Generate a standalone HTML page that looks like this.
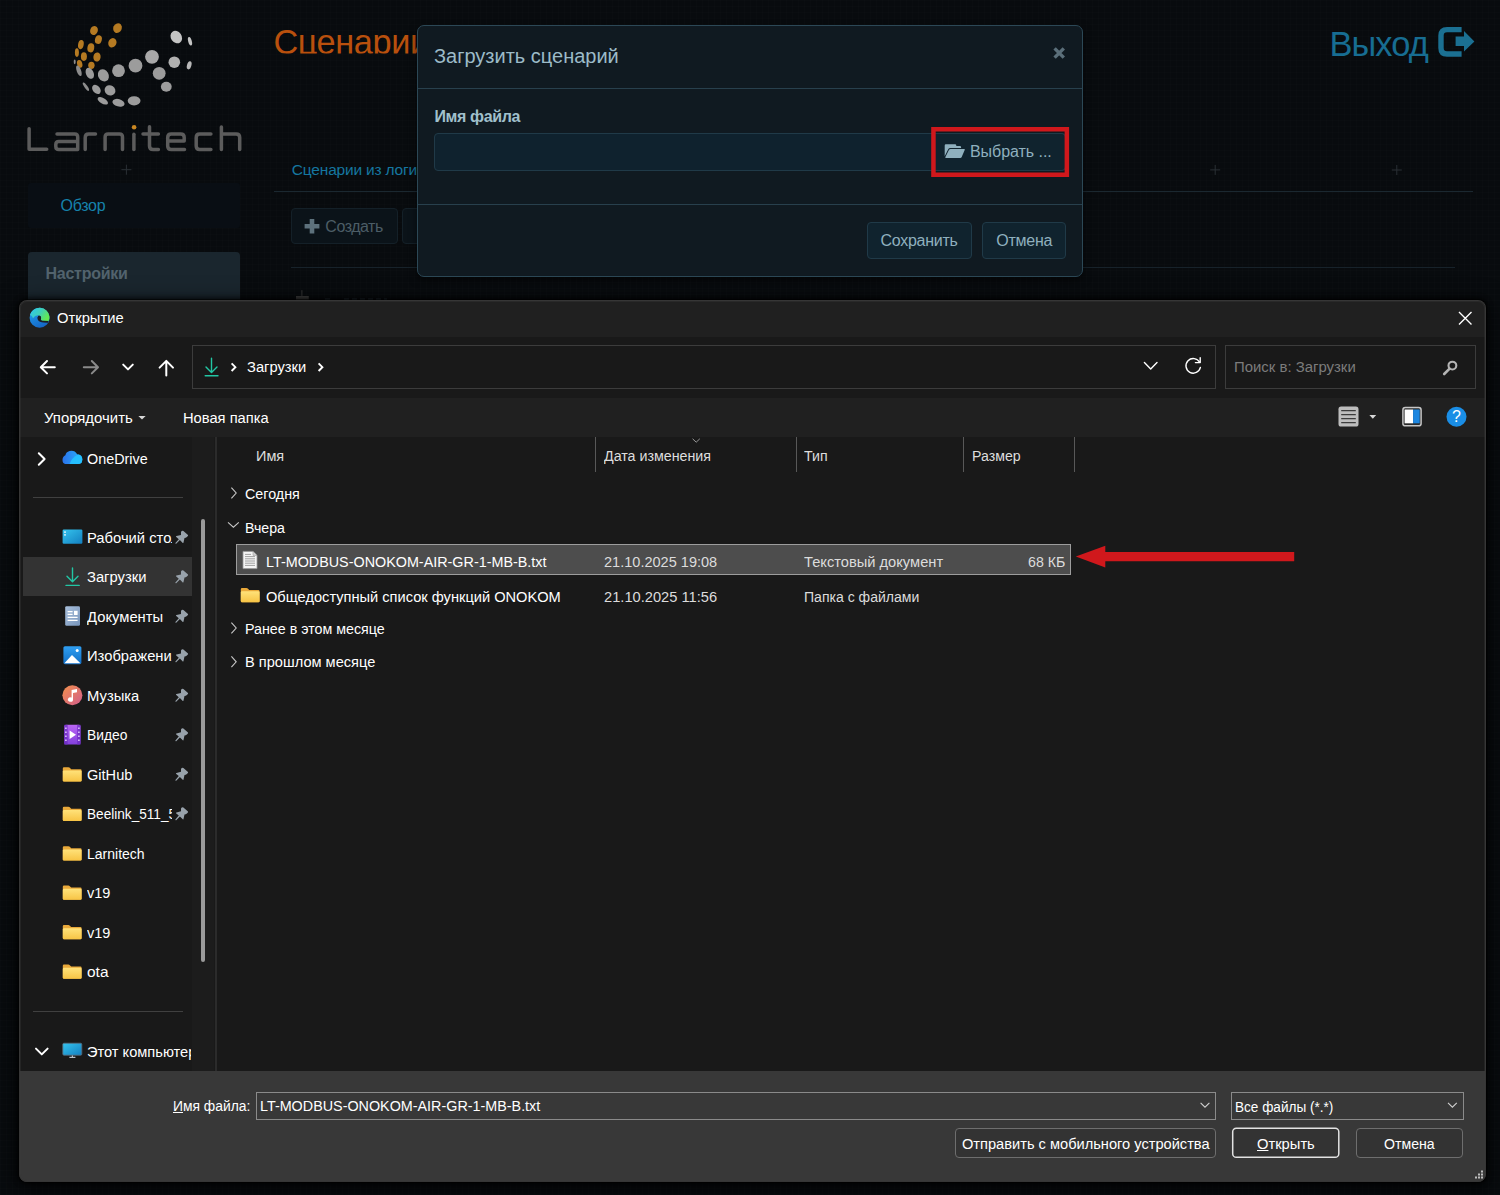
<!DOCTYPE html>
<html lang="ru"><head><meta charset="utf-8"><title>Открытие</title>
<style>
html,body{margin:0;padding:0;}
body{width:1500px;height:1195px;overflow:hidden;position:relative;background:#080b0e;font-family:"Liberation Sans",sans-serif;}
.a{position:absolute;box-sizing:border-box;}
.t{position:absolute;white-space:nowrap;line-height:24px;height:24px;font-family:"Liberation Sans",sans-serif;}
.i{display:inline-block;transform-origin:0 50%;white-space:nowrap;}
svg{position:absolute;overflow:visible;}
</style></head><body>
<!-- ===== background web page (dimmed) ===== -->
<div class="a" id="grid" style="left:0;top:0;width:1500px;height:1195px;background-image:linear-gradient(rgba(255,255,255,.008) 1px,transparent 1px),linear-gradient(90deg,rgba(255,255,255,.008) 1px,transparent 1px);background-size:6px 6px;"></div>
<div class="a" style="left:28px;top:183px;width:212px;height:45px;background:#090e14;border-radius:3px;"></div>
<div class="a" style="left:28px;top:252px;width:212px;height:50px;background:#1a262e;border-radius:4px 4px 0 0;"></div>
<div class="a" style="left:274px;top:191px;width:1199px;height:1px;background:#1b2830;"></div>
<div class="a" style="left:291px;top:267px;width:1164px;height:1px;background:#17222a;"></div>
<div class="a" style="left:291px;top:208px;width:107px;height:36px;background:#0b1319;border:1px solid #142028;border-radius:4px;"></div>
<div class="a" style="left:402px;top:208px;width:60px;height:36px;background:#0b1319;border:1px solid #142028;border-radius:4px;"></div>
<!--LOGO-->
<svg id="bgicons" width="1500" height="310" viewBox="0 0 1500 310" style="left:0;top:0;">
<!-- logo dots -->
<g fill="#b57a22">
<ellipse cx="117.5" cy="28.1" rx="4.2" ry="5" transform="rotate(25 117.5 28.1)"/>
<ellipse cx="94" cy="30.5" rx="3.8" ry="4.6" transform="rotate(20 94 30.5)"/>
<ellipse cx="98.4" cy="39.6" rx="3.4" ry="4.4" transform="rotate(15 98.4 39.6)"/>
<ellipse cx="112.4" cy="42.8" rx="4" ry="4.8" transform="rotate(25 112.4 42.8)"/>
<ellipse cx="80.9" cy="44.6" rx="2.8" ry="4.6" transform="rotate(10 80.9 44.6)"/>
<ellipse cx="90.8" cy="47.8" rx="3.4" ry="4.6" transform="rotate(10 90.8 47.8)"/>
<ellipse cx="76.9" cy="52.6" rx="2" ry="4.4"/>
<ellipse cx="83.9" cy="56.6" rx="3" ry="4.4"/>
<ellipse cx="97" cy="57" rx="3.6" ry="4.6" transform="rotate(10 97 57)"/>
<ellipse cx="79.7" cy="63.9" rx="2.6" ry="4" transform="rotate(-15 79.7 63.9)"/>
<ellipse cx="91.4" cy="65.3" rx="3.2" ry="3.6"/>
</g>
<g fill="#9c9c9c">
<ellipse cx="176.3" cy="37.1" rx="5.4" ry="6.6" transform="rotate(-35 176.3 37.1)" fill="#c4c4c4"/>
<ellipse cx="190" cy="41.2" rx="1.8" ry="4.4" transform="rotate(-15 190 41.2)" fill="#c4c4c4"/>
<circle cx="152" cy="56.8" r="6.9" fill="#a8a8a8"/>
<circle cx="174.3" cy="62.2" r="5.8" fill="#b0b0b0"/>
<ellipse cx="189.2" cy="65.3" rx="2.2" ry="4.2" transform="rotate(15 189.2 65.3)" fill="#b8b8b8"/>
<circle cx="135.5" cy="65.7" r="6.9"/>
<circle cx="159.2" cy="73.3" r="6.4"/>
<circle cx="118.5" cy="70.7" r="6.4"/>
<ellipse cx="103.4" cy="75.3" rx="5.2" ry="6.4" transform="rotate(-30 103.4 75.3)"/>
<ellipse cx="89.8" cy="73.3" rx="3.8" ry="5.8" transform="rotate(-25 89.8 73.3)"/>
<ellipse cx="78.9" cy="70.7" rx="2.2" ry="5.6" transform="rotate(-20 78.9 70.7)" fill="#8c8c8c"/>
<ellipse cx="74.7" cy="61.8" rx="1" ry="2.4" fill="#8c8c8c"/>
<ellipse cx="166.3" cy="86.7" rx="5.4" ry="5"/>
<ellipse cx="110" cy="90.4" rx="5.6" ry="5" transform="rotate(35 110 90.4)"/>
<ellipse cx="96.4" cy="89.4" rx="3.6" ry="5.2" transform="rotate(-40 96.4 89.4)"/>
<ellipse cx="85.9" cy="86.7" rx="1.5" ry="5" transform="rotate(-35 85.9 86.7)" fill="#8c8c8c"/>
<ellipse cx="134.1" cy="100.8" rx="6.4" ry="4.6"/>
<ellipse cx="118.5" cy="102.8" rx="6.2" ry="3.7" transform="rotate(15 118.5 102.8)"/>
<ellipse cx="102.8" cy="100.8" rx="5.8" ry="2.8" transform="rotate(30 102.8 100.8)"/>
</g>
<!-- wordmark -->
<g fill="none" stroke="#5c5c5c" stroke-width="3.5" stroke-linecap="round" stroke-linejoin="round">
<path d="M29.1 128.8 V149.3 H46.7"/>
<path d="M57 134.1 H74.7 Q77.7 134.1 77.7 137.1 V149.4 H58.8 Q55.8 149.4 55.8 146.4 V144.5 Q55.8 141.5 58.8 141.5 H77.7"/>
<path d="M85.2 149.6 V137.6 Q85.2 134.1 88.7 134.1 H95.5"/>
<path d="M105.1 149.6 V137.1 Q105.1 134.1 108.1 134.1 H119.5 Q122.5 134.1 122.5 137.1 V149.6"/>
<path d="M133.9 134.2 V149.6"/>
<path d="M149.5 126.7 V145.9 Q149.5 149.4 153 149.4 H158.4 M143 134.1 H158.4"/>
<path d="M184.5 149.4 H171.2 Q167.7 149.4 167.7 145.9 V137.6 Q167.7 134.1 171.2 134.1 H180.7 Q184.2 134.1 184.2 137.6 V140.9 H167.7"/>
<path d="M210.9 134.1 H199.7 Q196.2 134.1 196.2 137.6 V145.9 Q196.2 149.4 199.7 149.4 H210.9"/>
<path d="M221.4 126.9 V149.6 M221.4 134.1 H236.2 Q239.7 134.1 239.7 137.6 V149.6"/>
</g>
<circle cx="134.1" cy="127.2" r="2.3" fill="#c98722"/>
<!-- crosses -->
<path d="M121.4 169.7 H131.4 M126.4 164.7 V174.7 M1210.2 169.9 H1220.2 M1215.2 164.9 V174.9 M1391.8 170 H1401.8 M1396.8 165 V175" stroke="#2a3035" stroke-width="1"/>
<!-- plus icon -->
<path d="M312 219 V233.4 M304.6 226.2 H319.4" stroke="#5d717c" stroke-width="4.6" fill="none"/>
<!-- exit icon -->
<path d="M1461.6 29.6 H1447 Q1441 29.6 1441 35.6 V48 Q1441 54 1447 54 H1461.6" stroke="#1b7092" stroke-width="5.4" fill="none" stroke-linejoin="round"/>
<path d="M1455.6 36.6 H1464 V31 L1474.4 41.4 L1464 51.6 V46 H1455.6 Z" fill="#1b7092"/>
<!-- small hidden icons near dialog top -->
<path d="M301.9 290.2 V296.2" stroke="#363636" stroke-width="1"/>
<rect x="296" y="296" width="12.8" height="5" fill="#3e3e3e"/>
<path d="M325 299.3 H332 M344 299.3 H387" stroke="#24323a" stroke-width="1.4" stroke-dasharray="5 3"/>
</svg>

<span id="h1" class="t" style="left:273.40px;top:29.60px;font-size:34.3px;color:#b9500d;font-weight:400;clip-path:inset(0 10px 0 0);"><span class="i" style="letter-spacing:-0.400px;">Сценарии</span></span>
<span id="exit" class="t" style="left:1329.40px;top:32.20px;font-size:34.4px;color:#176d92;font-weight:400;"><span class="i" style="letter-spacing:-0.850px;">Выход</span></span>
<span id="m_obzor" class="t" style="left:60.50px;top:194.00px;font-size:16px;color:#1682ab;font-weight:400;"><span class="i" style="letter-spacing:-0.275px;">Обзор</span></span>
<span id="m_nastr" class="t" style="left:45.50px;top:262.00px;font-size:16px;color:#52636d;font-weight:700;"><span class="i" style="letter-spacing:-0.262px;">Настройки</span></span>
<span id="scen_logi" class="t" style="left:291.80px;top:157.80px;font-size:15.5px;color:#1577a0;font-weight:400;"><span class="i" style="letter-spacing:-0.187px;">Сценарии из логи</span></span>
<span id="btn_create" class="t" style="left:325.30px;top:215.00px;font-size:16px;color:#4c5d66;font-weight:400;"><span class="i" style="letter-spacing:-0.467px;">Создать</span></span>
<!-- ===== web modal ===== -->
<div class="a" id="modal" style="left:417px;top:25px;width:666px;height:252px;background:#101a21;border:1px solid #2c4856;border-radius:7px;box-shadow:0 3px 9px rgba(0,0,0,.5);"></div>
<div class="a" style="left:418px;top:88px;width:664px;height:1px;background:#28404d;"></div>
<div class="a" style="left:418px;top:204px;width:664px;height:1px;background:#28404d;"></div>
<div class="a" style="left:434px;top:133px;width:632px;height:38px;background:#0f222e;border:1px solid #203a48;border-radius:4px;"></div>
<div class="a" style="left:935px;top:133px;width:131px;height:38px;background:#10232e;border:1px solid #203a48;border-left:none;border-radius:0 5px 5px 0;"></div>
<div class="a" style="left:867px;top:222px;width:105px;height:37px;background:#10232e;border:1px solid #203a48;border-radius:4px;"></div>
<div class="a" style="left:982px;top:222px;width:84px;height:37px;background:#10232e;border:1px solid #203a48;border-radius:4px;"></div>
<!--WEBICONS-->
<svg id="webicons" width="1500" height="300" viewBox="0 0 1500 300" style="left:0;top:0;">
<!-- modal close -->
<path d="M1054.6 48.4 L1063.8 57.6 M1063.8 48.4 L1054.6 57.6" stroke="#5b6f7a" stroke-width="3.4" fill="none"/>
<!-- folder-open icon -->
<path d="M944.7 145.5 Q944.7 144.3 945.9 144.3 H955.1 Q956.3 144.3 956.3 145.5 V146.1 H959.9 Q961.1 146.1 961.1 147.3 V148.1 H950.4 Q948.8 148.1 948.1 149.5 L944.7 156.2 Z" fill="#8fb0be"/>
<path d="M950.6 149.1 H964.2 Q965.2 149.1 964.7 150.1 L961.6 157.2 Q961.2 158 960.2 158 H945.9 Q944.9 158 945.4 157 L948.9 150.1 Q949.4 149.1 950.6 149.1 Z" fill="#8fb0be"/>
<rect x="933.45" y="129.25" width="133.4" height="45.5" fill="none" stroke="#d0181c" stroke-width="4.5"/>
</svg>

<span id="md_title" class="t" style="left:434.00px;top:44.00px;font-size:20px;color:#9cbbc8;font-weight:400;"><span class="i" style="letter-spacing:-0.006px;">Загрузить сценарий</span></span>
<span id="md_label" class="t" style="left:434.50px;top:105.00px;font-size:16px;color:#a0c0cc;font-weight:700;"><span class="i" style="letter-spacing:-0.387px;">Имя файла</span></span>
<span id="md_choose" class="t" style="left:969.90px;top:140.00px;font-size:16px;color:#8fb0be;font-weight:400;"><span class="i" style="letter-spacing:-0.030px;">Выбрать ...</span></span>
<span id="md_save" class="t" style="left:880.60px;top:228.50px;font-size:16px;color:#8fb0be;font-weight:400;"><span class="i" style="letter-spacing:-0.288px;">Сохранить</span></span>
<span id="md_cancel" class="t" style="left:996.30px;top:228.50px;font-size:16px;color:#8fb0be;font-weight:400;"><span class="i" style="letter-spacing:-0.260px;">Отмена</span></span>
<!-- ===== file dialog ===== -->
<div class="a" id="fd" style="left:19px;top:300px;width:1467px;height:882px;background:#191919;border-radius:8px;overflow:hidden;box-shadow:0 0 0 1px rgba(0,0,0,.5), 0 0 5px 2px rgba(0,0,0,.7), 0 6px 22px 4px rgba(0,0,0,.55);">
  <div class="a" style="left:0;top:0;width:1467px;height:37px;background:#202020;"></div>
  <div class="a" style="left:0;top:37px;width:1467px;height:61px;background:#191919;"></div>
  <div class="a" style="left:0;top:98px;width:1467px;height:39px;background:#202020;"></div>
  <div class="a" style="left:0;top:771px;width:1467px;height:111px;background:#383838;"></div>
  <div class="a" style="left:173px;top:137px;width:22px;height:634px;background:#1c1c1c;"></div>
  <div class="a" style="left:196px;top:137px;width:2px;height:634px;background:#2b2b2b;"></div>
  <div class="a" style="left:0;top:0;width:1467px;height:882px;border:1px solid #363636;border-radius:8px;box-shadow:inset 0 0 0 1px rgba(60,60,60,.35);"></div>
</div>
<div class="a" style="left:192px;top:345px;width:1024px;height:44px;border:1px solid #3c3c3c;"></div>
<div class="a" style="left:1225px;top:345px;width:251px;height:44px;border:1px solid #3c3c3c;"></div>
<div class="a" style="left:23px;top:557px;width:169px;height:39px;background:#333333;"></div>
<div class="a" style="left:201px;top:519px;width:4px;height:443px;background:#9a9a9a;border-radius:2px;"></div>
<div class="a" style="left:33px;top:497px;width:150px;height:1px;background:#404040;"></div>
<div class="a" style="left:33px;top:1011px;width:150px;height:1px;background:#404040;"></div>
<div class="a" style="left:595px;top:437px;width:1px;height:35px;background:#585858;"></div>
<div class="a" style="left:796px;top:437px;width:1px;height:35px;background:#585858;"></div>
<div class="a" style="left:963px;top:437px;width:1px;height:35px;background:#585858;"></div>
<div class="a" style="left:1074px;top:437px;width:1px;height:35px;background:#585858;"></div>
<div class="a" style="left:236px;top:544px;width:835px;height:31px;background:#4d4d4d;border:1px solid #9d9d9d;"></div>
<div class="a" style="left:256px;top:1092px;width:960px;height:28px;border:1px solid #8a8a8a;background:#383838;"></div>
<div class="a" style="left:1231px;top:1092px;width:233px;height:28px;border:1px solid #8a8a8a;background:#383838;"></div>
<div class="a" style="left:955px;top:1128px;width:261px;height:30px;border:1px solid #6e6e6e;border-radius:4px;background:#333333;"></div>
<div class="a" style="left:1232px;top:1127.5px;width:107.5px;height:30.5px;border-radius:4px;background:#333333;"></div>
<div class="a" style="left:1356px;top:1128px;width:107px;height:30px;border:1px solid #6e6e6e;border-radius:4px;background:#333333;"></div>
<!--FDICONS-->
<svg id="fdicons" width="1500" height="1195" viewBox="0 0 1500 1195" style="left:0;top:0;">
<defs>
<linearGradient id="gFold" x1="0" y1="0" x2="0" y2="1"><stop offset="0" stop-color="#ffe27a"/><stop offset="1" stop-color="#f7c445"/></linearGradient>
<linearGradient id="gDesk" x1="0" y1="0" x2="1" y2="1"><stop offset="0" stop-color="#35c4ee"/><stop offset="1" stop-color="#137fc0"/></linearGradient>
<linearGradient id="gDoc" x1="0" y1="0" x2="1" y2="1"><stop offset="0" stop-color="#a9c0dc"/><stop offset="1" stop-color="#7794ba"/></linearGradient>
<linearGradient id="gPic" x1="0" y1="0" x2="0" y2="1"><stop offset="0" stop-color="#2f9ff2"/><stop offset="1" stop-color="#126fc6"/></linearGradient>
<linearGradient id="gMus" x1="0" y1="0" x2="1" y2="1"><stop offset="0" stop-color="#f3914b"/><stop offset="1" stop-color="#d15c8c"/></linearGradient>
<linearGradient id="gVid" x1="0" y1="0" x2="0" y2="1"><stop offset="0" stop-color="#bb66f5"/><stop offset="1" stop-color="#8240dc"/></linearGradient>
<linearGradient id="gCloud" x1="0" y1="0" x2="1" y2="0"><stop offset="0" stop-color="#2a72ea"/><stop offset=".5" stop-color="#2a92f4"/><stop offset="1" stop-color="#28b4fc"/></linearGradient>
<linearGradient id="gEdge1" x1="0" y1="0" x2=".6" y2="1"><stop offset="0" stop-color="#27b4f2"/><stop offset=".5" stop-color="#1b84dc"/><stop offset="1" stop-color="#1566c6"/></linearGradient>
<linearGradient id="gEdge2" x1="0" y1="0" x2="1" y2=".5"><stop offset="0" stop-color="#2cc6f4"/><stop offset=".55" stop-color="#3fd0b8"/><stop offset="1" stop-color="#62ea52"/></linearGradient>
<g id="folder">
  <path d="M0.8 1.6 Q0.8 0.4 2 0.4 L6.4 0.4 Q7.2 0.4 7.8 1 L9.2 2.4 L18.4 2.4 Q19.6 2.4 19.6 3.6 L19.6 13.4 Q19.6 14.6 18.4 14.6 L2 14.6 Q0.8 14.6 0.8 13.4 Z" fill="#e9a93a"/>
  <path d="M0.8 4.8 Q0.8 3.6 2 3.6 L18.4 3.6 Q19.6 3.6 19.6 4.8 L19.6 13.4 Q19.6 14.6 18.4 14.6 L2 14.6 Q0.8 14.6 0.8 13.4 Z" fill="url(#gFold)"/>
</g>
<g id="pin" fill="#98a2ab"><path d="M6.2 1.3 Q7.2 -0.6 8.6 0.3 L13.2 4.3 Q13.9 5 12.1 6.3 Q11 7.2 9.7 7.3 L8.7 11.7 Q8.3 12.6 7.7 11.9 L5.1 9.3 L1.4 13 Q0.3 13.2 0.6 12.3 L4 8.4 L1.2 6 Q0.9 5.4 1.7 5.3 L6.2 4.1 Z"/></g>
</defs>
<!-- title: edge icon -->
<g transform="translate(39.6 317.8)">
<circle r="10" fill="url(#gEdge1)"/>
<path d="M-9.6 -2.8 A10 10 0 0 1 9.9 -1.4 Q10.2 1.2 8.9 3.1 L2.6 3 Q0.6 2.6 1.1 0.2 Q1.4 -2 -0.6 -2.4 Q-4.4 -3 -6.6 0.4 Q-7.4 -2.6 -9.6 -2.8 Z" fill="url(#gEdge2)"/>
<path d="M-0.8 -2.3 Q-2.9 -0.6 -1.8 1.9 Q-0.2 4.7 4 4.7 L8.2 4.9 Q8.7 4.1 8.9 3.1 L2.6 3 Q0.6 2.6 1.1 0.2 Q1.3 -1.9 -0.8 -2.3 Z" fill="#1b1f24"/>
<ellipse cx="-0.2" cy="0.1" rx="1.7" ry="2.2" fill="#1b1f24"/>
</g>
<!-- title close -->
<path d="M1459 312 L1471.5 324.5 M1471.5 312 L1459 324.5" stroke="#fff" stroke-width="1.4" fill="none"/>
<!-- nav arrows -->
<path d="M54.8 367.2 L41 367.2 M47 361 L40.8 367.2 L47 373.4" stroke="#fff" stroke-width="2" fill="none" stroke-linecap="round" stroke-linejoin="round"/>
<path d="M83.8 367.2 L97.8 367.2 M91.8 361 L98 367.2 L91.8 373.4" stroke="#8a8a8a" stroke-width="2" fill="none" stroke-linecap="round" stroke-linejoin="round"/>
<path d="M123.2 364.6 L128 369.4 L132.8 364.6" stroke="#fff" stroke-width="2" fill="none" stroke-linecap="round" stroke-linejoin="round"/>
<path d="M166.3 375.4 L166.3 361.2 M159.6 367.6 L166.3 360.9 L173 367.6" stroke="#fff" stroke-width="2" fill="none" stroke-linecap="round" stroke-linejoin="round"/>
<!-- address download icon -->
<path d="M211.5 358.2 L211.5 372.4 M206 367 L211.5 372.6 L217 367 M205.2 375.8 L218 375.8" stroke="#22c6a4" stroke-width="1.4" fill="none" stroke-linecap="round" stroke-linejoin="round"/>
<path d="M231.6 363.4 L235.4 367.2 L231.6 371" stroke="#fff" stroke-width="1.9" fill="none"/>
<path d="M318.6 363.4 L322.4 367.2 L318.6 371" stroke="#fff" stroke-width="1.9" fill="none"/>
<!-- address dropdown chevron + refresh -->
<path d="M1144.4 362.6 L1150.7 368.9 L1157 362.6" stroke="#fff" stroke-width="1.4" fill="none" stroke-linecap="round" stroke-linejoin="round"/>
<path d="M1199.6 362.2 A7.3 7.3 0 1 0 1200.4 367.4" stroke="#fff" stroke-width="1.4" fill="none" stroke-linecap="round"/>
<path d="M1200.2 357.8 L1200.2 362.6 L1195.4 362.6" stroke="#fff" stroke-width="1.4" fill="none" stroke-linecap="round" stroke-linejoin="round"/>
<!-- search icon -->
<circle cx="1452.4" cy="365.6" r="3.9" stroke="#b4b4b4" stroke-width="2.1" fill="none"/>
<path d="M1449.6 368.6 L1444.2 374" stroke="#b4b4b4" stroke-width="2.6" stroke-linecap="round"/>
<!-- toolbar: organize arrow -->
<path d="M138.4 416 L145.6 416 L142 419.6 Z" fill="#d8d8d8"/>
<!-- view icon -->
<rect x="1338.5" y="406.6" width="20" height="19.9" rx="2.6" fill="#bdbdbd"/>
<path d="M1341.2 410.6 H1355.8 M1341.2 414.6 H1355.8 M1341.2 418.6 H1355.8 M1341.2 422.6 H1355.8" stroke="#3c3c3c" stroke-width="1.1"/>
<path d="M1369.4 415 L1376.2 415 L1372.8 418.8 Z" fill="#d8d8d8"/>
<!-- preview pane icon -->
<rect x="1402.9" y="407.5" width="18.2" height="18.3" rx="2.4" fill="#2a2a2a" stroke="#c6c6c6" stroke-width="1.5"/>
<rect x="1404.6" y="409.5" width="8.5" height="13.8" fill="#ffffff"/>
<rect x="1413.1" y="409.5" width="6.6" height="13.8" fill="#1c86e0"/>
<!-- help -->
<circle cx="1456.5" cy="416.7" r="10" fill="#1a8ee6"/>
<text x="1456.5" y="422.3" font-family="Liberation Sans, sans-serif" font-size="16" font-weight="400" fill="#fff" text-anchor="middle">?</text>
<!-- sidebar chevrons -->
<path d="M38.8 453.2 L44.6 459 L38.8 464.8" stroke="#fff" stroke-width="2" fill="none" stroke-linecap="round" stroke-linejoin="round"/>
<path d="M36 1048.6 L41.8 1054.4 L47.6 1048.6" stroke="#fff" stroke-width="2" fill="none" stroke-linecap="round" stroke-linejoin="round"/>
<!-- onedrive cloud -->
<path d="M65.2 464 Q62.5 463.6 62.5 460 Q62.6 456.5 65.4 455.3 Q66 452 69.5 451 Q74.5 449.8 77.2 454.2 Q82.3 454.6 82.3 459.4 Q82.2 464 78 464 Z" fill="url(#gCloud)"/>
<path d="M69.6 464 Q71.6 457.6 78.2 454.4 Q82.3 455 82.3 459.4 Q82.2 464 78 464 Z" fill="#25c2ff" opacity=".9"/>
<!-- desktop -->
<rect x="62.6" y="529.6" width="19.8" height="14.2" rx="1.2" fill="url(#gDesk)"/>
<rect x="64.2" y="531.4" width="1.6" height="1.4" fill="#fff"/><rect x="64.2" y="534.2" width="1.6" height="1.4" fill="#fff"/>
<!-- downloads (sidebar) -->
<path d="M72.5 568 L72.5 581.6 M67 576.2 L72.5 581.8 L78 576.2 M66 585.4 L79.2 585.4" stroke="#22c6a4" stroke-width="1.4" fill="none" stroke-linecap="round" stroke-linejoin="round"/>
<!-- documents -->
<rect x="65.2" y="606.2" width="14.8" height="19.6" rx="1.4" fill="url(#gDoc)"/>
<path d="M67.6 611.6 H72.6 M67.6 614.4 H72.6 M67.6 617.4 H77.6 M67.6 620.4 H77.6" stroke="#fff" stroke-width="1.1"/>
<rect x="74" y="610.8" width="3.6" height="4.2" fill="#fff"/>
<!-- pictures -->
<rect x="63.4" y="646.2" width="18" height="18" rx="1.6" fill="url(#gPic)"/>
<path d="M64.4 663.2 L72 655 L80.4 663.2 Z" fill="#fff"/>
<circle cx="77.2" cy="650.6" r="1.5" fill="#fff"/>
<!-- music -->
<circle cx="72.4" cy="695.2" r="10" fill="url(#gMus)"/>
<path d="M71.6 699.4 L71.6 690 L77 689 L77 692.2 L73 693 L73 699.4 A2.6 2.2 0 1 1 71.6 697.6 Z" fill="#fff"/>
<!-- video -->
<rect x="64.2" y="724.8" width="16.4" height="19.8" rx="1.6" fill="url(#gVid)"/>
<rect x="64.2" y="724.8" width="3.4" height="19.8" fill="#6a2bbf" opacity=".75"/><rect x="77.2" y="724.8" width="3.4" height="19.8" fill="#6a2bbf" opacity=".75"/>
<path d="M65.2 727.4h1.4v1.6h-1.4z M65.2 731.4h1.4v1.6h-1.4z M65.2 735.4h1.4v1.6h-1.4z M65.2 739.4h1.4v1.6h-1.4z M78.2 727.4h1.4v1.6h-1.4z M78.2 731.4h1.4v1.6h-1.4z M78.2 735.4h1.4v1.6h-1.4z M78.2 739.4h1.4v1.6h-1.4z" fill="#e9d4ff"/>
<path d="M69.6 730.4 L76 734.7 L69.6 739 Z" fill="#fff"/>
<!-- folders sidebar -->
<use href="#folder" x="62" y="766.8"/>
<use href="#folder" x="62" y="806.3"/>
<use href="#folder" x="62" y="845.8"/>
<use href="#folder" x="62" y="885.2"/>
<use href="#folder" x="62" y="924.7"/>
<use href="#folder" x="62" y="964.2"/>
<!-- this pc -->
<rect x="62.8" y="1043.2" width="19" height="12" rx="1.2" fill="url(#gDesk)" stroke="#5a6a78" stroke-width=".8"/>
<path d="M69.4 1057.4 H75.4 M72.4 1055.4 V1057.4" stroke="#b8c0c8" stroke-width="1.2"/>
<!-- pins -->
<use href="#pin" x="174.8" y="530.8"/><use href="#pin" x="174.8" y="570.3"/><use href="#pin" x="174.8" y="609.8"/><use href="#pin" x="174.8" y="649.3"/>
<use href="#pin" x="174.8" y="688.8"/><use href="#pin" x="174.8" y="728.2"/><use href="#pin" x="174.8" y="767.7"/><use href="#pin" x="174.8" y="807.2"/>
<!-- header sort chevron -->
<path d="M692.6 438.8 L696.2 442.2 L699.8 438.8" stroke="#9a9a9a" stroke-width="1" fill="none"/>
<!-- group chevrons -->
<path d="M231.4 487.6 L236.2 493 L231.4 498.4" stroke="#c8c8c8" stroke-width="1.1" fill="none"/>
<path d="M228 522.4 L233.4 527.2 L238.8 522.4" stroke="#c8c8c8" stroke-width="1.1" fill="none"/>
<path d="M231.4 622.6 L236.2 628 L231.4 633.4" stroke="#c8c8c8" stroke-width="1.1" fill="none"/>
<path d="M231.4 656.4 L236.2 661.8 L231.4 667.2" stroke="#c8c8c8" stroke-width="1.1" fill="none"/>
<!-- text doc icon -->
<path d="M243 551.4 L253 551.4 L257 555.4 L257 568.6 L243 568.6 Z" fill="#f4f4f4" stroke="#9a9a9a" stroke-width=".8"/>
<path d="M253 551.4 L253 555.4 L257 555.4" fill="#d0d0d0" stroke="#9a9a9a" stroke-width=".6"/>
<path d="M245 556.6 H255 M245 558.8 H255 M245 561 H255 M245 563.2 H255 M245 565.4 H255 M245 554.4 H251" stroke="#8a8a8a" stroke-width=".8"/>
<!-- folder in list -->
<use href="#folder" x="240" y="587.6"/>
<!-- footer dropdown chevrons -->
<path d="M1200.6 1102.8 L1205 1107.2 L1209.4 1102.8" stroke="#d0d0d0" stroke-width="1.1" fill="none"/>
<path d="M1448 1102.8 L1452.4 1107.2 L1456.8 1102.8" stroke="#d0d0d0" stroke-width="1.1" fill="none"/>
<rect x="1232.7" y="1128.2" width="106.1" height="29.1" rx="3.6" fill="none" stroke="#e2e2e2" stroke-width="1.5"/>
<!-- resize grip -->
<path d="M1481 1170.5h2v2h-2z M1481 1173.5h2v2h-2z M1481 1176.5h2v2h-2z M1478 1173.5h2v2h-2z M1478 1176.5h2v2h-2z M1475 1176.5h2v2h-2z" fill="#bdbdbd"/>
</svg>

<svg width="230" height="30" viewBox="1070 540 230 30" style="left:1070px;top:540px;"><path d="M1075.8 556.4 L1105.3 545.8 V552 H1294.2 V561.2 H1105.3 V567.5 Z" fill="#d0181c"/></svg>
<span id="fd_title" class="t" style="left:56.80px;top:306.20px;font-size:15.3px;color:#ffffff;font-weight:400;"><span class="i" style="letter-spacing:0.000px;transform:scaleX(0.9638);">Открытие</span></span>
<span id="fd_addr" class="t" style="left:247.30px;top:354.90px;font-size:15.3px;color:#ffffff;font-weight:400;"><span class="i" style="letter-spacing:0.000px;transform:scaleX(0.9613);">Загрузки</span></span>
<span id="fd_search" class="t" style="left:1234.00px;top:355.30px;font-size:15.3px;color:#7c7c7c;font-weight:400;"><span class="i" style="letter-spacing:0.000px;transform:scaleX(0.9752);">Поиск в: Загрузки</span></span>
<span id="fd_org" class="t" style="left:43.70px;top:406.10px;font-size:15.3px;color:#ffffff;font-weight:400;"><span class="i" style="letter-spacing:0.000px;transform:scaleX(0.9747);">Упорядочить</span></span>
<span id="fd_new" class="t" style="left:183.30px;top:406.10px;font-size:15.3px;color:#ffffff;font-weight:400;"><span class="i" style="letter-spacing:0.000px;transform:scaleX(0.9607);">Новая папка</span></span>
<span id="sb0" class="t" style="left:86.70px;top:447.00px;font-size:15.3px;color:#ffffff;font-weight:400;"><span class="i" style="letter-spacing:0.000px;transform:scaleX(0.9385);">OneDrive</span></span>
<span id="sb1" class="t" style="left:86.70px;top:525.94px;font-size:15.3px;color:#ffffff;font-weight:400;width:85.0px;overflow:hidden;"><span class="i" style="letter-spacing:0.000px;transform:scaleX(0.9655);">Рабочий стол</span></span>
<span id="sb2" class="t" style="left:86.70px;top:565.41px;font-size:15.3px;color:#ffffff;font-weight:400;"><span class="i" style="letter-spacing:0.000px;transform:scaleX(0.9645);">Загрузки</span></span>
<span id="sb3" class="t" style="left:86.70px;top:604.88px;font-size:15.3px;color:#ffffff;font-weight:400;"><span class="i" style="letter-spacing:0.000px;transform:scaleX(0.9658);">Документы</span></span>
<span id="sb4" class="t" style="left:86.70px;top:644.35px;font-size:15.3px;color:#ffffff;font-weight:400;width:85.0px;overflow:hidden;"><span class="i" style="letter-spacing:0.000px;transform:scaleX(0.9648);">Изображения</span></span>
<span id="sb5" class="t" style="left:86.70px;top:683.82px;font-size:15.3px;color:#ffffff;font-weight:400;"><span class="i" style="letter-spacing:0.000px;transform:scaleX(0.9667);">Музыка</span></span>
<span id="sb6" class="t" style="left:86.70px;top:723.29px;font-size:15.3px;color:#ffffff;font-weight:400;"><span class="i" style="letter-spacing:0.000px;transform:scaleX(0.9044);">Видео</span></span>
<span id="sb7" class="t" style="left:86.70px;top:762.76px;font-size:15.3px;color:#ffffff;font-weight:400;"><span class="i" style="letter-spacing:0.000px;transform:scaleX(0.9521);">GitHub</span></span>
<span id="sb8" class="t" style="left:86.70px;top:802.23px;font-size:15.3px;color:#ffffff;font-weight:400;width:85.0px;overflow:hidden;"><span class="i" style="letter-spacing:0.000px;transform:scaleX(0.8902);">Beelink_511_5</span></span>
<span id="sb9" class="t" style="left:86.70px;top:841.70px;font-size:15.3px;color:#ffffff;font-weight:400;"><span class="i" style="letter-spacing:0.000px;transform:scaleX(0.9159);">Larnitech</span></span>
<span id="sb10" class="t" style="left:86.70px;top:881.17px;font-size:15.3px;color:#ffffff;font-weight:400;"><span class="i" style="letter-spacing:0.000px;transform:scaleX(0.9480);">v19</span></span>
<span id="sb11" class="t" style="left:86.70px;top:920.64px;font-size:15.3px;color:#ffffff;font-weight:400;"><span class="i" style="letter-spacing:0.000px;transform:scaleX(0.9480);">v19</span></span>
<span id="sb12" class="t" style="left:86.70px;top:960.11px;font-size:15.3px;color:#ffffff;font-weight:400;"><span class="i" style="letter-spacing:0.000px;transform:scaleX(1.0095);">ota</span></span>
<span id="sb_pc" class="t" style="left:86.70px;top:1039.60px;font-size:15.3px;color:#ffffff;font-weight:400;width:104.8px;overflow:hidden;"><span class="i" style="letter-spacing:0.000px;transform:scaleX(0.9557);">Этот компьютер</span></span>
<span id="h_name" class="t" style="left:255.80px;top:443.70px;font-size:15.3px;color:#dedede;font-weight:400;"><span class="i" style="letter-spacing:0.000px;transform:scaleX(0.9467);">Имя</span></span>
<span id="h_date" class="t" style="left:604.00px;top:443.70px;font-size:15.3px;color:#dedede;font-weight:400;"><span class="i" style="letter-spacing:0.000px;transform:scaleX(0.9313);">Дата изменения</span></span>
<span id="h_type" class="t" style="left:804.00px;top:443.70px;font-size:15.3px;color:#dedede;font-weight:400;"><span class="i" style="letter-spacing:0.000px;transform:scaleX(0.9269);">Тип</span></span>
<span id="h_size" class="t" style="left:971.70px;top:443.70px;font-size:15.3px;color:#dedede;font-weight:400;"><span class="i" style="letter-spacing:0.000px;transform:scaleX(0.9245);">Размер</span></span>
<span id="g_today" class="t" style="left:244.70px;top:481.50px;font-size:15.3px;color:#ffffff;font-weight:400;"><span class="i" style="letter-spacing:0.000px;transform:scaleX(0.9356);">Сегодня</span></span>
<span id="g_yest" class="t" style="left:245.40px;top:515.60px;font-size:15.3px;color:#ffffff;font-weight:400;"><span class="i" style="letter-spacing:0.000px;transform:scaleX(0.9256);">Вчера</span></span>
<span id="f1_name" class="t" style="left:265.80px;top:549.60px;font-size:15.3px;color:#ffffff;font-weight:400;"><span class="i" style="letter-spacing:0.000px;transform:scaleX(0.9385);">LT-MODBUS-ONOKOM-AIR-GR-1-MB-B.txt</span></span>
<span id="f1_date" class="t" style="left:604.00px;top:549.60px;font-size:15.3px;color:#dcdcdc;font-weight:400;"><span class="i" style="letter-spacing:0.000px;transform:scaleX(0.9504);">21.10.2025 19:08</span></span>
<span id="f1_type" class="t" style="left:804.00px;top:549.60px;font-size:15.3px;color:#dcdcdc;font-weight:400;"><span class="i" style="letter-spacing:0.000px;transform:scaleX(0.9593);">Текстовый документ</span></span>
<span id="f1_size" class="t" style="left:1028.30px;top:549.60px;font-size:15.3px;color:#dcdcdc;font-weight:400;"><span class="i" style="letter-spacing:0.000px;transform:scaleX(0.9275);">68 КБ</span></span>
<span id="f2_name" class="t" style="left:265.60px;top:585.00px;font-size:15.3px;color:#ffffff;font-weight:400;"><span class="i" style="letter-spacing:0.000px;transform:scaleX(0.9558);">Общедоступный список функций ONOKOM</span></span>
<span id="f2_date" class="t" style="left:604.00px;top:585.00px;font-size:15.3px;color:#dcdcdc;font-weight:400;"><span class="i" style="letter-spacing:0.000px;transform:scaleX(0.9585);">21.10.2025 11:56</span></span>
<span id="f2_type" class="t" style="left:804.00px;top:585.00px;font-size:15.3px;color:#dcdcdc;font-weight:400;"><span class="i" style="letter-spacing:0.000px;transform:scaleX(0.9183);">Папка с файлами</span></span>
<span id="g_month" class="t" style="left:245.30px;top:616.80px;font-size:15.3px;color:#ffffff;font-weight:400;"><span class="i" style="letter-spacing:0.000px;transform:scaleX(0.9320);">Ранее в этом месяце</span></span>
<span id="g_last" class="t" style="left:245.30px;top:650.30px;font-size:15.3px;color:#ffffff;font-weight:400;"><span class="i" style="letter-spacing:0.000px;transform:scaleX(0.9551);">В прошлом месяце</span></span>
<span id="ft_label" class="t" style="left:172.70px;top:1094.30px;font-size:15.3px;color:#ffffff;font-weight:400;"><span class="i" style="letter-spacing:0.000px;transform:scaleX(0.9059);"><u>И</u>мя файла:</span></span>
<span id="ft_input" class="t" style="left:260.00px;top:1094.40px;font-size:15.3px;color:#ffffff;font-weight:400;"><span class="i" style="letter-spacing:0.000px;transform:scaleX(0.9378);">LT-MODBUS-ONOKOM-AIR-GR-1-MB-B.txt</span></span>
<span id="ft_filter" class="t" style="left:1235.20px;top:1094.50px;font-size:15.3px;color:#ffffff;font-weight:400;"><span class="i" style="letter-spacing:0.000px;transform:scaleX(0.8883);">Все файлы (*.*)</span></span>
<span id="ft_send" class="t" style="left:961.60px;top:1131.90px;font-size:15.3px;color:#ffffff;font-weight:400;"><span class="i" style="letter-spacing:0.000px;transform:scaleX(0.9560);">Отправить с мобильного устройства</span></span>
<span id="ft_open" class="t" style="left:1257.10px;top:1131.90px;font-size:15.3px;color:#ffffff;font-weight:400;"><span class="i" style="letter-spacing:0.000px;transform:scaleX(0.9617);"><u>О</u>ткрыть</span></span>
<span id="ft_cancel" class="t" style="left:1384.20px;top:1131.90px;font-size:15.3px;color:#ffffff;font-weight:400;"><span class="i" style="letter-spacing:0.000px;transform:scaleX(0.9236);">Отмена</span></span>
</body></html>
